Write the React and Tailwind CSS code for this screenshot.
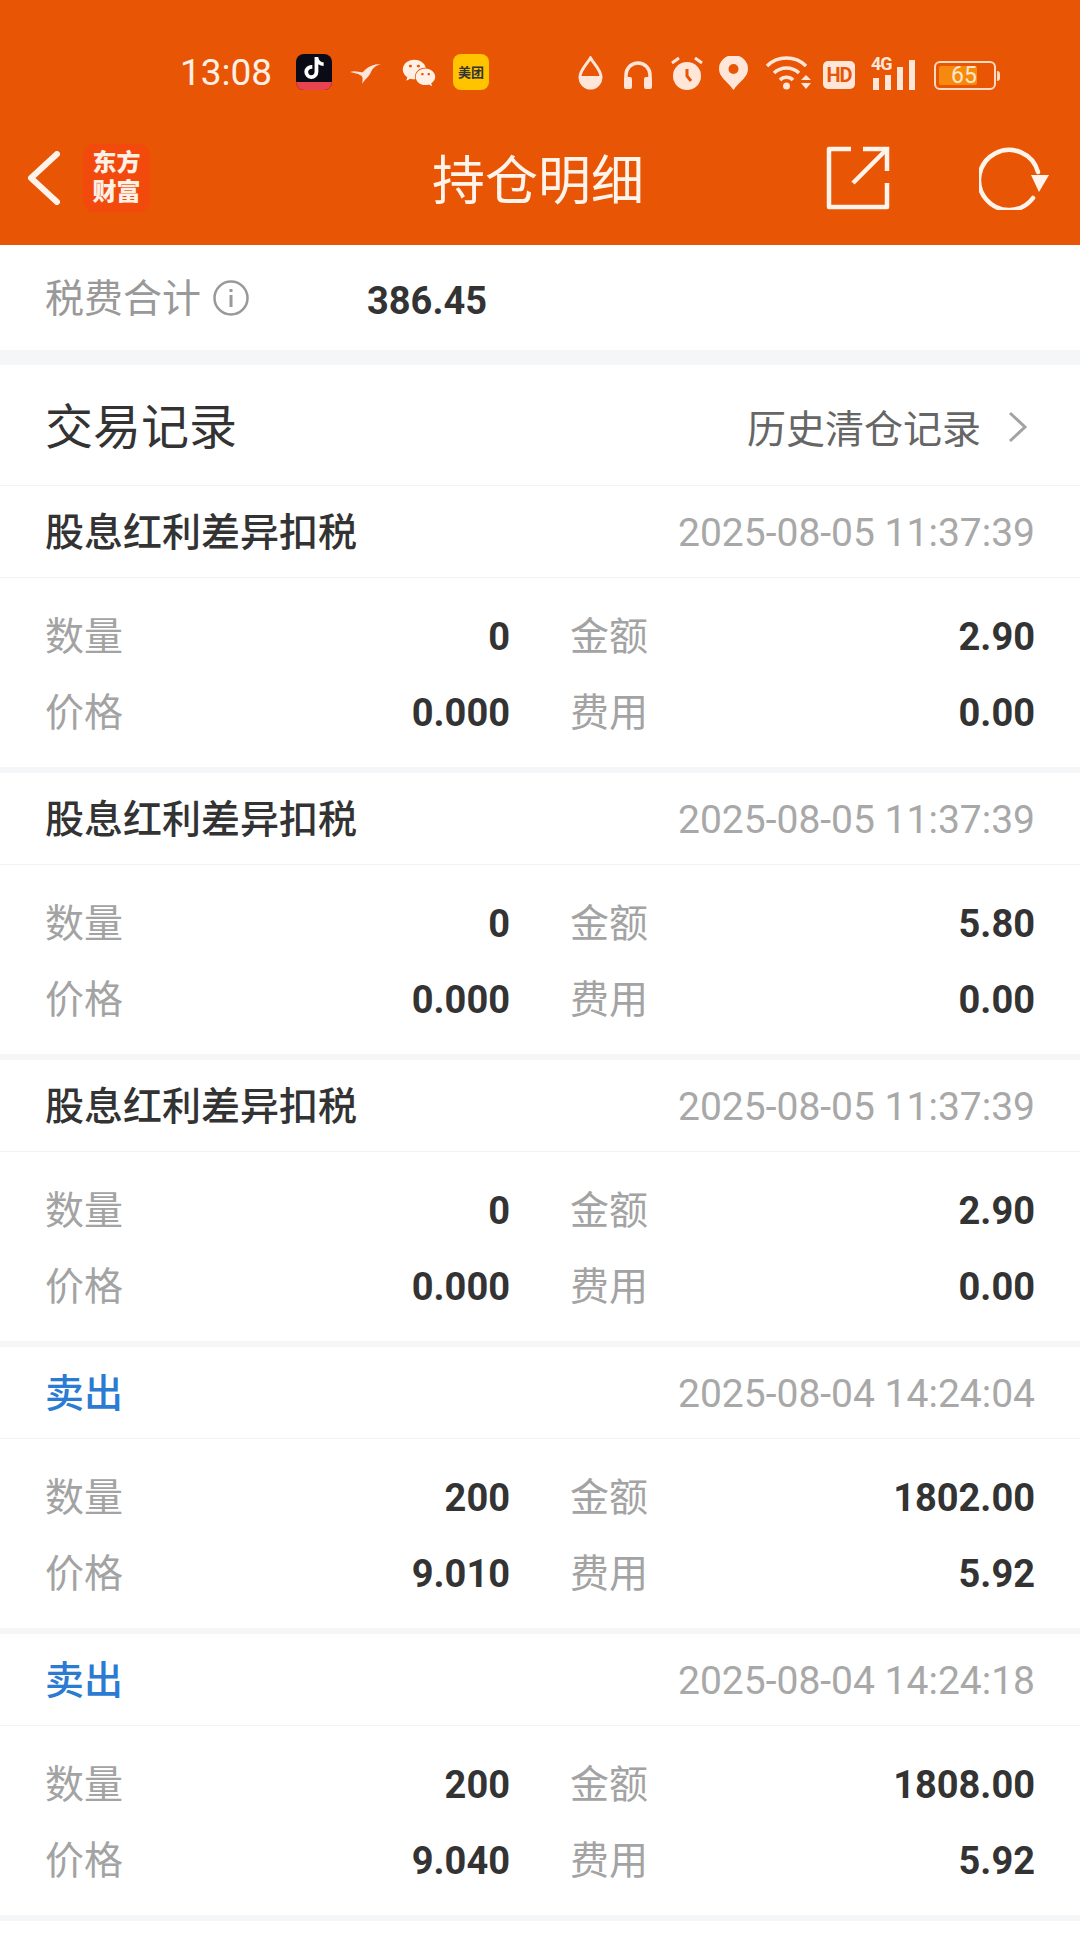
import React from "react";
import { FaTiktok, FaWeixin } from "react-icons/fa";

const records = [
  { title: "股息红利差异扣税", time: "2025-08-05 11:37:39", qty: "0", amount: "2.90", price: "0.000", fee: "0.00" },
  { title: "股息红利差异扣税", time: "2025-08-05 11:37:39", qty: "0", amount: "5.80", price: "0.000", fee: "0.00" },
  { title: "股息红利差异扣税", time: "2025-08-05 11:37:39", qty: "0", amount: "2.90", price: "0.000", fee: "0.00" },
  { title: "卖出", sell: true, time: "2025-08-04 14:24:04", qty: "200", amount: "1802.00", price: "9.010", fee: "5.92" },
  { title: "卖出", sell: true, time: "2025-08-04 14:24:18", qty: "200", amount: "1808.00", price: "9.040", fee: "5.92" },
];

const cjk = "font-['Roboto','Noto_Sans_CJK_SC',sans-serif]";

function Cell({ label, value }) {
  return (
    <div className="flex h-[76px] items-center justify-between">
      <span className="text-[39px] text-[#a3a3a3]">{label}</span>
      <span className="text-[38px] font-bold text-[#333333]">{value}</span>
    </div>
  );
}

function RecordCard({ item }) {
  return (
    <div className="border-b-[6px] border-[#f5f6f8] bg-white">
      <div className="flex h-[92px] items-center justify-between border-b border-[#f3f3f3] px-[45px] pt-[3px]">
        <span className={item.sell ? "text-[39px] font-medium text-[#2b7bd3]" : "text-[39px] font-medium text-[#333333]"}>{item.title}</span>
        <span className="text-[39px] text-[#a8a8a8]">{item.time}</span>
      </div>
      <div className="grid h-[189px] grid-cols-2 content-center gap-x-[60px] px-[45px] pt-[5px]">
        <Cell label="数量" value={item.qty} />
        <Cell label="金额" value={item.amount} />
        <Cell label="价格" value={item.price} />
        <Cell label="费用" value={item.fee} />
      </div>
    </div>
  );
}

function StatusBar() {
  const c = "#ffe6d8";
  return (
    <div className="flex h-[100px] items-end pb-[10px] pl-[180px]">
      <span className="mb-[-1px] w-[92px] text-[37px] leading-[36px] text-[#fff0e6]">13:08</span>
      <div className="relative ml-[24px] flex h-[36px] w-[36px] items-start justify-center overflow-hidden rounded-[8px] bg-[#0b0b18] pt-[3px] text-white">
        <FaTiktok size={22} />
        <div className="absolute bottom-0 left-0 h-[8px] w-full bg-[#e8434f]" />
      </div>
      <svg className="ml-[18px] mb-[6px]" width="32" height="20" viewBox="0 0 32 20" fill={c}>
        <path d="M0 8 C6 6 10 9 13 8 C17 3 23 0 31 0 C25 2 23 4 21 8 C19 13 15 15 12 20 C13 15 13 12 10 11 C7 9 3 9 0 8Z" />
      </svg>
      <div className="ml-[20px] text-[#fff0e6]">
        <FaWeixin size={34} />
      </div>
      <div className={`ml-[17px] flex h-[36px] w-[36px] items-center justify-center rounded-[8px] bg-[#ffc300] text-[13px] font-bold leading-none text-[#333333] ${cjk}`}>美团</div>

      <svg className="ml-[89px]" width="25" height="34" viewBox="0 0 25 34" fill="none">
        <path d="M12.5 2 C9 8 2 14 2 21 A10.5 10.5 0 0 0 23 21 C23 14 16 8 12.5 2Z" stroke={c} strokeWidth="3" />
        <path d="M1 20 H24 V22 A11.5 11.5 0 0 1 1 22Z" fill={c} />
      </svg>
      <svg className="ml-[20px]" width="30" height="30" viewBox="0 0 30 30" fill="none">
        <path d="M3 20 V15 A12 12 0 0 1 27 15 V20" stroke={c} strokeWidth="3.5" />
        <rect x="1" y="17" width="8" height="12" rx="2" fill={c} />
        <rect x="21" y="17" width="8" height="12" rx="2" fill={c} />
      </svg>
      <svg className="ml-[18px]" width="32" height="34" viewBox="0 0 32 34" fill="none">
        <circle cx="16" cy="20" r="14" fill={c} />
        <path d="M16 13 V20 L20 25" stroke="#e85504" strokeWidth="3" />
        <path d="M8 2 L1 7 M24 2 L31 7" stroke={c} strokeWidth="3" />
      </svg>
      <svg className="ml-[16px]" width="29" height="34" viewBox="0 0 29 34" fill="none">
        <path d="M14.5 34 C8 25 0 21 0 13 A14.5 14 0 0 1 29 13 C29 21 21 25 14.5 34Z" fill={c} />
        <circle cx="14.5" cy="13" r="5" fill="#e85504" />
      </svg>
      <svg className="ml-[18px]" width="45" height="34" viewBox="0 0 45 34" fill="none">
        <path d="M1 10 A28 28 0 0 1 40 10" stroke={c} strokeWidth="3.5" />
        <path d="M8 17 A18 18 0 0 1 33 17" stroke={c} strokeWidth="3.5" />
        <path d="M14 24 A9 9 0 0 1 27 24" stroke={c} strokeWidth="3.5" />
        <circle cx="20.500" cy="30" r="3.500" fill={c} />
        <path d="M35 24 L40 19 L45 24Z M35 27 L45 27 L40 33Z" fill={c} />
      </svg>
      <div className="ml-[12px] mb-[1px] flex h-[28px] w-[32px] items-center justify-center rounded-[5px] bg-[#ffe6d8] font-['Roboto',sans-serif] text-[20px] font-bold leading-none tracking-[-1px] text-[#e85504]">HD</div>
      <div className="relative ml-[18px] flex h-[32px] w-[46px] items-end gap-[6px]">
        <span className="absolute left-[-2px] top-[-3px] font-['Roboto',sans-serif] text-[18px] font-bold leading-none tracking-[-1px] text-[#ffe6d8]">4G</span>
        <div className="h-[12px] w-[6px] bg-[#ffe6d8]" />
        <div className="h-[15px] w-[6px] bg-[#ffe6d8]" />
        <div className="h-[23px] w-[6px] bg-[#ffe6d8]" />
        <div className="h-[30px] w-[6px] bg-[#ffe6d8]" />
      </div>
      <div className="ml-[15px] flex items-center">
        <div className="flex h-[29px] w-[62px] items-stretch rounded-[6px] border-2 border-[#ffd9c2] p-[3px]">
          <div className="flex w-[38px] items-center rounded-[2px] bg-[#f58a0f] pl-[12px] font-['Roboto',sans-serif] text-[23px] leading-none text-[#ffe6c8]">65</div>
        </div>
        <div className="ml-[1px] h-[10px] w-[3px] rounded-r bg-[#ffd9c2]" />
      </div>
    </div>
  );
}

function NavBar() {
  return (
    <div className="grid h-[145px] grid-cols-[1fr_auto_1fr] items-center pt-[10px] pl-[27px] pr-[31px]">
      <div className="flex items-center">
        <svg width="33" height="54" viewBox="0 0 33 54" fill="none">
          <path d="M30 3 L4 27 L30 51" stroke="#fff4ec" strokeWidth="6" strokeLinecap="round" strokeLinejoin="round" />
        </svg>
        <div className={`ml-[23px] flex h-[68px] w-[67px] items-center justify-center rounded-[12px] bg-[#f2490c] text-center text-[24px] font-black leading-[29px] text-[#fff0e6] ${cjk}`}>
          东方<br />财富
        </div>
      </div>
      <div className="pt-[10px] text-[53px] leading-none text-[#fff4ec]">持仓明细</div>
      <div className="flex items-center justify-end gap-[89px]">
        <svg width="64" height="64" viewBox="0 0 64 64" fill="none" stroke="#fff4ec" strokeWidth="4.5">
          <path d="M25 3 H3 V61 H61 V37" strokeLinejoin="round" />
          <path d="M37 3 H61 V25" />
          <path d="M61 3 L27 37" />
        </svg>
        <svg width="70" height="64" viewBox="0 0 70 64" fill="none">
          <path d="M54 52 A30 30 0 1 1 59 26" stroke="#fff4ec" strokeWidth="4.5" strokeLinecap="round" />
          <path d="M52 29 H70 L60 46Z" fill="#fff4ec" />
        </svg>
      </div>
    </div>
  );
}

export default function App() {
  return (
    <div className={`flex h-[1940px] w-[1080px] flex-col overflow-hidden bg-white ${cjk}`}>
      <div className="h-[245px] bg-[#e85504]">
        <StatusBar />
        <NavBar />
      </div>

      <div className="flex h-[120px] items-center border-b-[15px] border-[#f5f6f8] pl-[45px]">
        <span className="mt-[4px] text-[39px] text-[#999999]">税费合计</span>
        <svg className="ml-[12px]" width="36" height="36" viewBox="0 0 36 36" fill="none" stroke="#999999" strokeWidth="2.500">
          <circle cx="18" cy="18" r="16.500" />
          <path d="M18 15 V27" strokeWidth="3" />
          <path d="M18 9 V12" strokeWidth="3" />
        </svg>
        <span className="ml-[118px] mt-[7px] text-[38px] font-bold text-[#333333]">386.45</span>
      </div>

      <div className="flex h-[121px] items-center justify-between border-b border-[#f3f3f3] pl-[45px] pr-[46px] pt-[3px]">
        <span className="mt-[2px] text-[48px] text-[#333333]">交易记录</span>
        <div className="flex items-center">
          <span className="mt-[7px] text-[39px] text-[#666666]">历史清仓记录</span>
          <svg className="ml-[27px] mr-[6px]" width="20" height="32" viewBox="0 0 20 32" fill="none">
            <path d="M2 2 L17 16 L2 30" stroke="#a3a3a3" strokeWidth="3" />
          </svg>
        </div>
      </div>

      {records.map((item, i) => (
        <RecordCard key={i} item={item} />
      ))}
    </div>
  );
}
